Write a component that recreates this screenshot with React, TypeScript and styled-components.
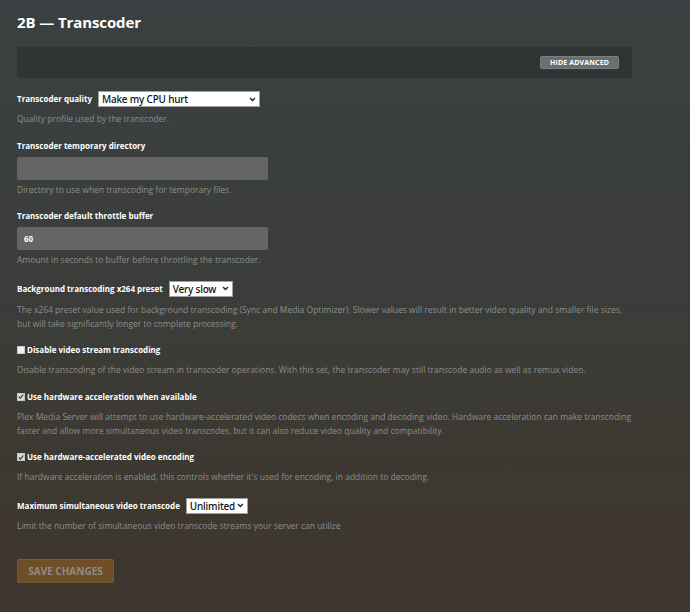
import React from "react";
import styled, { createGlobalStyle } from "styled-components";

const GlobalStyle = createGlobalStyle`
  html, body {
    margin: 0;
    padding: 0;
    height: 100%;
  }
  body {
    background: linear-gradient(180deg, #3a4041 0%, #3b3d3b 45%, #3d3830 80%, #3e362e 100%);
    font-family: "Open Sans", "Liberation Sans", sans-serif;
    color: #fff;
  }
  #root {
    min-height: 612px;
  }
`;

const Page = styled.div`
  padding: 12px 58px 20px 17px;
  width: 690px;
  box-sizing: border-box;
`;

const Title = styled.h1`
  margin: 0 0 15px;
  font-size: 15px;
  font-weight: 700;
  line-height: 20px;
  letter-spacing: -0.1px;
`;

const AdvancedBar = styled.div`
  height: 31px;
  background: rgba(30, 34, 34, 0.35);
  display: flex;
  align-items: center;
  justify-content: flex-end;
  padding-right: 13px;
  margin-bottom: 13px;
`;

const SmallButton = styled.button`
  width: 79px;
  height: 13px;
  padding: 0;
  background: #6a6e6e;
  border: 1px solid #7a7e7e;
  border-radius: 2px;
  color: #fff;
  font-family: "Open Sans", "Liberation Sans", sans-serif;
  font-size: 7px;
  font-weight: 700;
  letter-spacing: 0.15px;
  line-height: 11px;
`;

const Setting = styled.div`
  margin-bottom: 13.5px;
`;

const InlineRow = styled.div`
  display: flex;
  align-items: center;
  gap: 6px;
  height: 16px;
`;

const Label = styled.label`
  display: flex;
  align-items: center;
  gap: 2px;
  font-size: 8px;
  font-weight: 700;
  line-height: 12px;
  color: #fff;
`;

const StackLabel = styled(Label)`
  margin-bottom: 5px;
`;

const Select = styled.div<{ $w: number }>`
  width: ${(p) => p.$w}px;
  height: 16px;
  box-sizing: border-box;
  background: #fff;
  border: 1px solid #a0a0a0;
  color: #111;
  font-family: "Noto Sans", "Open Sans", sans-serif;
  font-size: 10px;
  font-weight: 500;
  letter-spacing: -0.2px;
  white-space: nowrap;
  display: flex;
  align-items: center;
  justify-content: space-between;
  gap: 2px;
  padding: 0 3px;
  line-height: 14px;
`;

const Chevron = () => (
  <svg width="7" height="5" viewBox="0 0 7 5">
    <path d="M1 1 L3.5 3.5 L6 1" fill="none" stroke="#222" strokeWidth="1.4" />
  </svg>
);

const TextInput = styled.div`
  width: 251px;
  height: 23px;
  box-sizing: border-box;
  background: #646565;
  border-radius: 2px;
  color: #fff;
  font-size: 8px;
  font-weight: 700;
  display: flex;
  align-items: center;
  padding-left: 7px;
`;

const Help = styled.p<{ $top?: number }>`
  margin: ${(p) => p.$top ?? 7}px 0 0;
  font-size: 8.5px;
  line-height: 14px;
  color: #8b8e8b;
  font-weight: 500;
  white-space: nowrap;
`;

const Box = styled.span<{ $checked?: boolean }>`
  width: 8px;
  height: 8px;
  box-sizing: border-box;
  background: ${(p) => (p.$checked ? "#d8d8d8" : "#f2f2f2")};
  border: 1px solid #c8c8c8;
  display: inline-flex;
  align-items: center;
  justify-content: center;
`;

const Check = ({ checked }: { checked?: boolean }) => (
  <Box $checked={checked}>
    {checked && (
      <svg width="7" height="7" viewBox="0 0 7 7">
        <path d="M1 3.6 L2.8 5.4 L6 1.2" fill="none" stroke="#333" strokeWidth="1.3" />
      </svg>
    )}
  </Box>
);

const SaveButton = styled.button`
  margin-top: 12.5px;
  width: 97px;
  height: 24px;
  background: #6e4f27;
  border: 1px solid #79592e;
  border-radius: 2px;
  color: #8f8c84;
  font-family: "Open Sans", "Liberation Sans", sans-serif;
  font-size: 10px;
  font-weight: 700;
  padding: 0;
`;

const App = () => {
  return (
    <>
      <GlobalStyle />
      <Page>
        <Title>2B — Transcoder</Title>
        <AdvancedBar>
          <SmallButton>HIDE ADVANCED</SmallButton>
        </AdvancedBar>

        <Setting>
          <InlineRow>
            <Label>Transcoder quality</Label>
            <Select $w={162}>
              Make my CPU hurt
              <Chevron />
            </Select>
          </InlineRow>
          <Help $top={5}>Quality profile used by the transcoder.</Help>
        </Setting>

        <Setting>
          <StackLabel>Transcoder temporary directory</StackLabel>
          <TextInput />
          <Help $top={3}>Directory to use when transcoding for temporary files.</Help>
        </Setting>

        <Setting>
          <StackLabel>Transcoder default throttle buffer</StackLabel>
          <TextInput>60</TextInput>
          <Help $top={3}>Amount in seconds to buffer before throttling the transcoder.</Help>
        </Setting>

        <Setting>
          <InlineRow>
            <Label>Background transcoding x264 preset</Label>
            <Select $w={64}>
              Very slow
              <Chevron />
            </Select>
          </InlineRow>
          <Help $top={6}>
            The x264 preset value used for background transcoding (Sync and Media Optimizer). Slower values will result in better video quality and smaller file sizes,
            <br />
            but will take significantly longer to complete processing.
          </Help>
        </Setting>

        <Setting>
          <Label>
            <Check /> Disable video stream transcoding
          </Label>
          <Help $top={7}>
            Disable transcoding of the video stream in transcoder operations. With this set, the transcoder may still transcode audio as well as remux video.
          </Help>
        </Setting>

        <Setting>
          <Label>
            <Check checked /> Use hardware acceleration when available
          </Label>
          <Help $top={7}>
            Plex Media Server will attempt to use hardware-accelerated video codecs when encoding and decoding video. Hardware acceleration can make transcoding
            <br />
            faster and allow more simultaneous video transcodes, but it can also reduce video quality and compatibility.
          </Help>
        </Setting>

        <Setting>
          <Label>
            <Check checked /> Use hardware-accelerated video encoding
          </Label>
          <Help $top={7}>
            If hardware acceleration is enabled, this controls whether it's used for encoding, in addition to decoding.
          </Help>
        </Setting>

        <Setting>
          <InlineRow>
            <Label>Maximum simultaneous video transcode</Label>
            <Select $w={62}>
              Unlimited
              <Chevron />
            </Select>
          </InlineRow>
          <Help $top={5}>Limit the number of simultaneous video transcode streams your server can utilize</Help>
        </Setting>

        <SaveButton>SAVE CHANGES</SaveButton>
      </Page>
    </>
  );
};

export default App;
